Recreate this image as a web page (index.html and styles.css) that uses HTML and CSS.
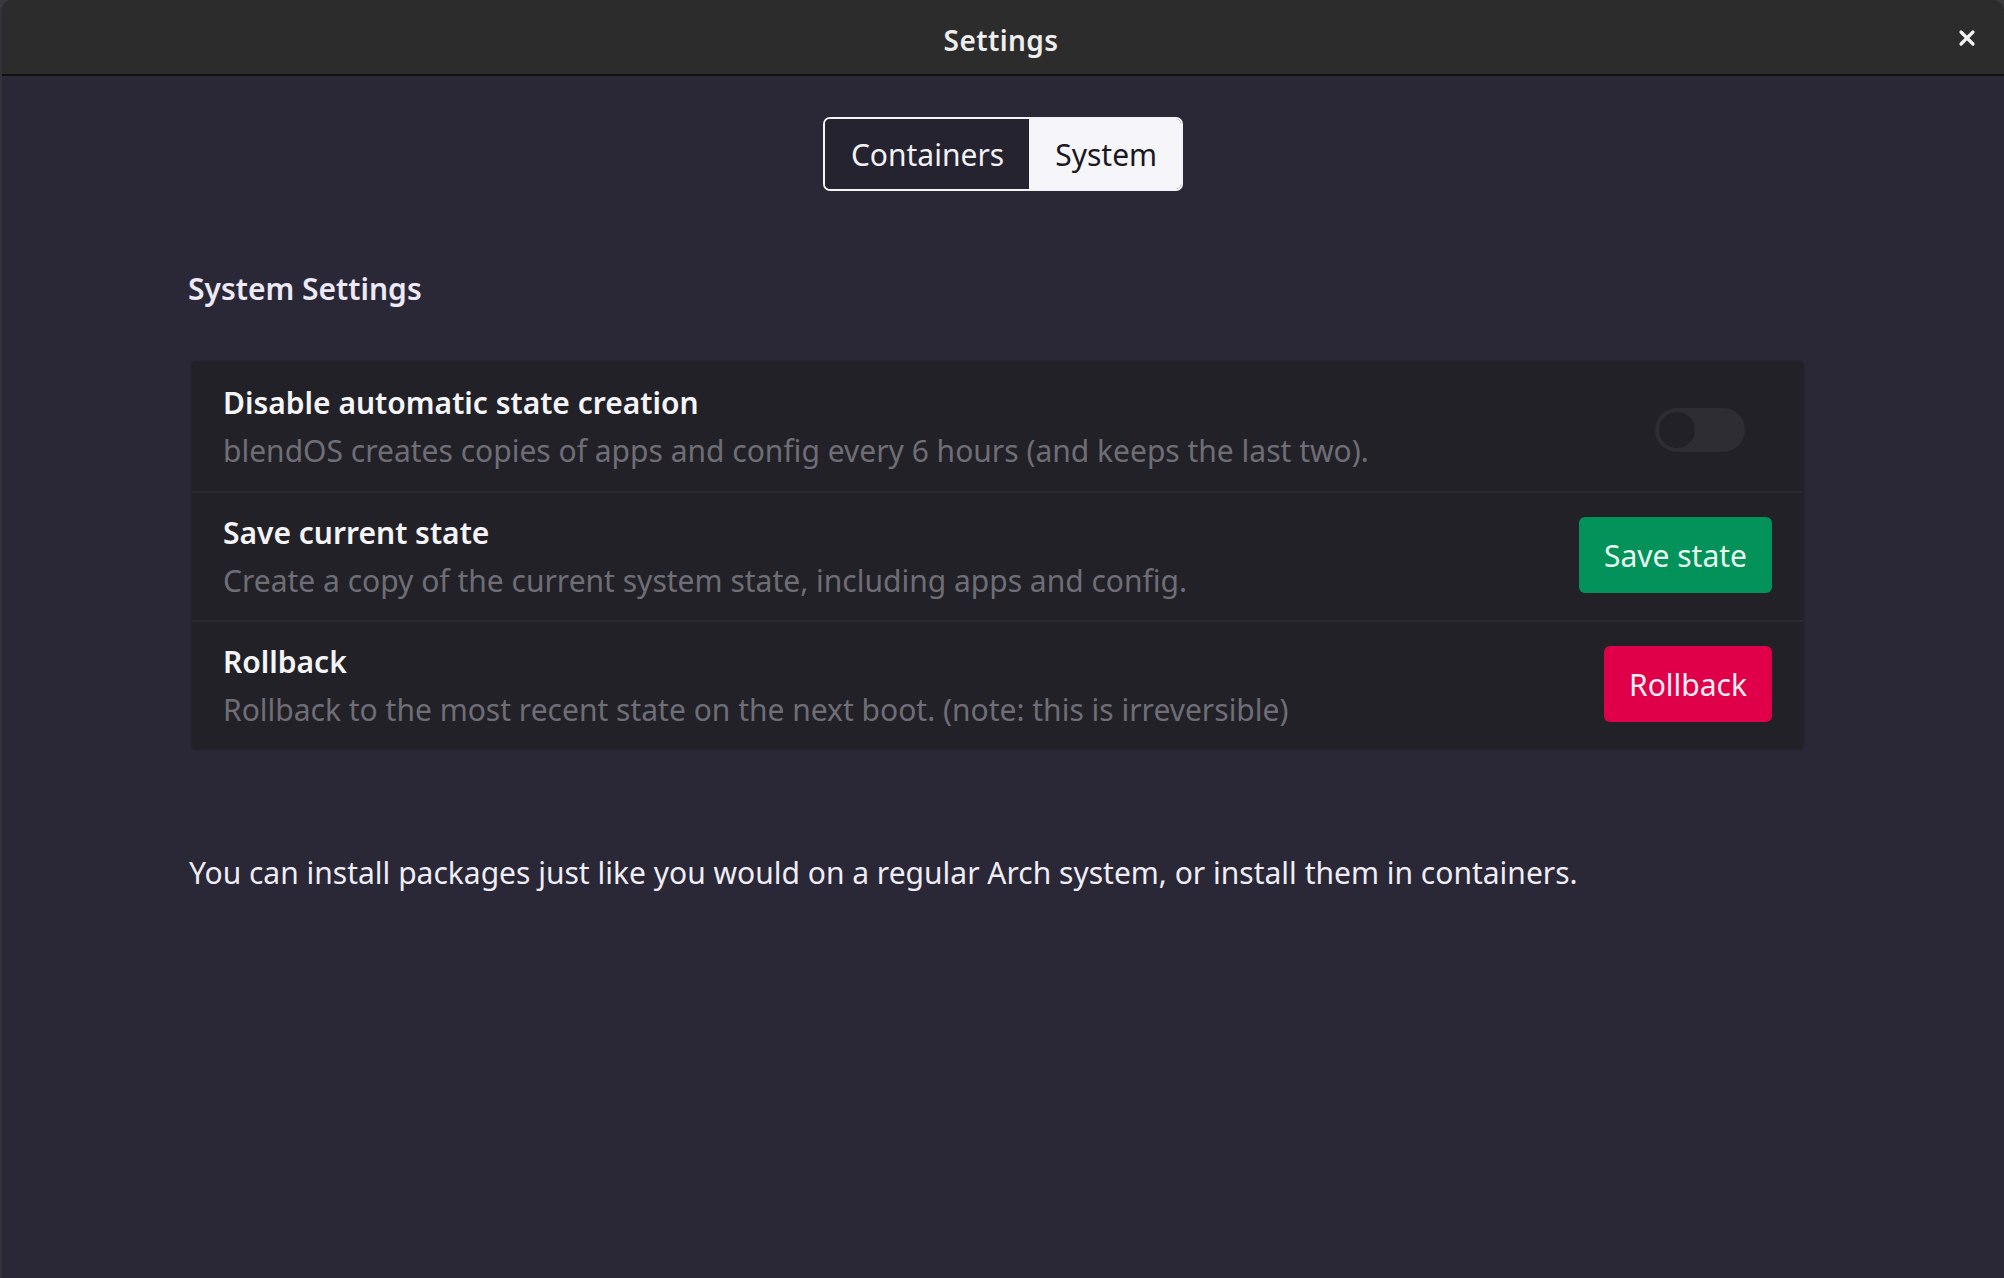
FILE: index.html
```html
<!DOCTYPE html>
<html lang="en">
<head>
<meta charset="utf-8">
<title>Settings</title>
<link rel="stylesheet" href="styles.css">
</head>
<body>
<div class="window">
  <header class="titlebar">
    <div class="title">Settings</div>
    <button class="close" aria-label="Close">
      <svg width="18" height="18" viewBox="0 0 18 18"><path d="M3 3 L15 15 M15 3 L3 15" stroke="#f2f2f2" stroke-width="3.2" stroke-linecap="round"/></svg>
    </button>
  </header>
  <main class="content">
    <div class="tabs-wrap">
      <div class="tabs">
        <div class="tab">Containers</div>
        <div class="tab active">System</div>
      </div>
    </div>
    <h2 class="section-title">System Settings</h2>
    <div class="card">
      <div class="row">
        <div class="row-text">
          <div class="row-title">Disable automatic state creation</div>
          <div class="row-sub">blendOS creates copies of apps and config every 6 hours (and keeps the last two).</div>
        </div>
        <div class="toggle"><div class="knob"></div></div>
      </div>
      <div class="row">
        <div class="row-text">
          <div class="row-title">Save current state</div>
          <div class="row-sub">Create a copy of the current system state, including apps and config.</div>
        </div>
        <button class="btn btn-green">Save state</button>
      </div>
      <div class="row">
        <div class="row-text">
          <div class="row-title">Rollback</div>
          <div class="row-sub">Rollback to the most recent state on the next boot. (note: this is irreversible)</div>
        </div>
        <button class="btn btn-red">Rollback</button>
      </div>
    </div>
    <p class="note">You can install packages just like you would on a regular Arch system, or install them in containers.</p>
  </main>
</div>
</body>
</html>
```

FILE: styles.css
```css
html, body {
  margin: 0;
  padding: 0;
  background: #3a3a3c;
}
body {
  font-family: "Noto Sans", "Open Sans", sans-serif;
  width: 2004px;
  height: 1278px;
  overflow: hidden;
}
.window {
  height: 1278px;
  box-sizing: border-box;
  display: flex;
  flex-direction: column;
  background: #2a2736;
  border-radius: 12px 12px 0 0;
  border-left: 2px solid #34313d;
  overflow: hidden;
}
.titlebar {
  height: 74px;
  flex: none;
  background: #2c2c2c;
  border-bottom: 2px solid #121212;
  display: flex;
  align-items: center;
  justify-content: center;
  position: relative;
}
.title {
  color: #eeeeee;
  font-size: 28px;
  font-weight: 600;
  letter-spacing: 0.4px;
  padding-top: 5px;
  margin-left: -4px;
}
.close {
  position: absolute;
  right: 28px;
  top: 29px;
  background: none;
  border: 0;
  padding: 0;
  width: 18px;
  height: 18px;
  display: flex;
}
.content {
  flex: 1;
  padding: 41px 201px 0 190px;
}
.tabs-wrap {
  display: flex;
  justify-content: center;
  margin-left: -190px;
  margin-right: -201px;
}
.tabs {
  display: flex;
  height: 74px;
  box-sizing: border-box;
  border: 2px solid #f4f3f7;
  border-radius: 7px;
  overflow: hidden;
}
.tab {
  display: flex;
  align-items: center;
  padding: 0 25px 0 26px;
  font-size: 30px;
  color: #f2f1f5;
  background: #262330;
}
.tab.active {
  background: #f6f5f9;
  color: #1a1822;
  padding: 0 24px 0 26px;
}
.section-title {
  margin: 78px 0 0 -4px;
  font-size: 30px;
  line-height: 40px;
  font-weight: 600;
  color: #ede9f6;
}
.card {
  margin-top: 53px;
  background: #222128;
  border-radius: 4px;
  box-shadow: 0 0 3px rgba(0, 0, 0, 0.35);
}
.row {
  height: 129px;
  box-sizing: border-box;
  display: flex;
  align-items: center;
  padding: 1px 31px 0 31px;
  border-top: 2px solid #2b2a31;
}
.row:first-child {
  border-top: 0;
}
.row-text {
  flex: 1;
  display: flex;
  flex-direction: column;
  gap: 4px;
}
.row-title {
  font-size: 30px;
  line-height: 44px;
  font-weight: 600;
  color: #f5f5f8;
}
.row-sub {
  font-size: 30px;
  line-height: 44px;
  color: #6f6e76;
}
.toggle {
  width: 90px;
  height: 44px;
  border-radius: 22px;
  background: #2e2d34;
  margin-right: 27px;
  margin-top: 5px;
  display: flex;
  align-items: center;
  padding-left: 4px;
  box-sizing: border-box;
}
.knob {
  width: 36px;
  height: 36px;
  border-radius: 50%;
  background: #222127;
}
.btn {
  height: 76px;
  border: 0;
  border-radius: 6px;
  font-family: inherit;
  font-size: 30px;
  padding: 0 25px;
  margin-top: -4px;
}
.btn-green {
  background: #02925a;
  color: #e8f7ef;
}
.btn-red {
  background: #df0049;
  color: #fbeef2;
}
.note {
  margin: 104px 0 0 -3px;
  font-size: 30px;
  line-height: 40px;
  color: #efedf5;
}
```
